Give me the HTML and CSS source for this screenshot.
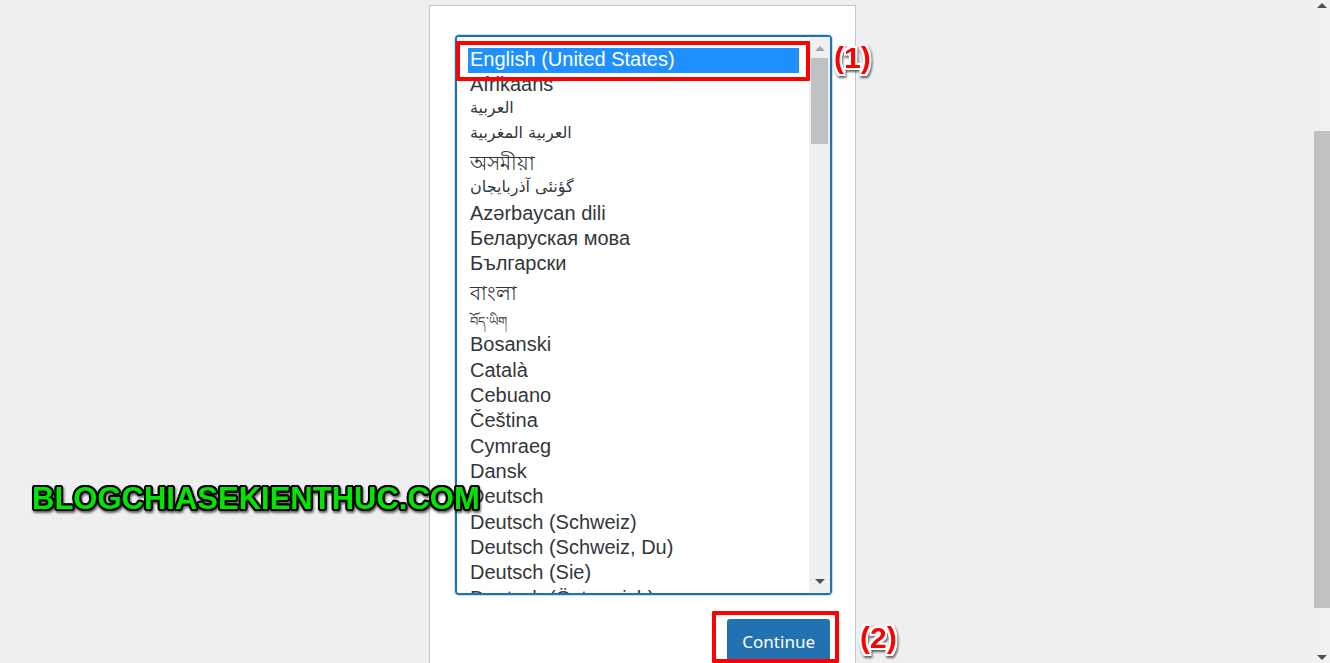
FILE: index.html
```
<!DOCTYPE html>
<html lang="en">
<head>
  <meta charset="UTF-8">
  <meta name="viewport" content="width=device-width, initial-scale=1.0">
  <title>WordPress Installation</title>
  <link rel="stylesheet" href="styles.css">
</head>
<body>
  <main class="page">
    <form class="setup">
      <div class="language-box">
        <select class="language" id="language" size="22" aria-label="Select a default language">
          <option value="" class="selected">English (United States)</option>
          <option value="af">Afrikaans</option>
          <option value="ar" class="arabic" lang="ar">العربية</option>
          <option value="ary" class="arabic" lang="ar">العربية المغربية</option>
          <option value="as" class="tall" lang="as">অসমীয়া</option>
          <option value="azb" class="arabic" lang="az">گؤنئی آذربایجان</option>
          <option value="az">Azərbaycan dili</option>
          <option value="bel">Беларуская мова</option>
          <option value="bg_BG">Български</option>
          <option value="bn_BD" class="tall" lang="bn">বাংলা</option>
          <option value="bo" class="tibetan" lang="bo">བོད་ཡིག</option>
          <option value="bs_BA">Bosanski</option>
          <option value="ca">Català</option>
          <option value="ceb">Cebuano</option>
          <option value="cs_CZ">Čeština</option>
          <option value="cy">Cymraeg</option>
          <option value="da_DK">Dansk</option>
          <option value="de_DE">Deutsch</option>
          <option value="de_CH">Deutsch (Schweiz)</option>
          <option value="de_CH_informal">Deutsch (Schweiz, Du)</option>
          <option value="de_DE_formal">Deutsch (Sie)</option>
          <option value="de_AT">Deutsch (Österreich)</option>
        </select>
        <div class="list-scroll" aria-hidden="true">
          <svg class="arrow muted" viewBox="0 0 10 5"><path d="M0 5L5 0L10 5Z"/></svg>
          <div class="list-thumb"></div>
          <svg class="arrow" viewBox="0 0 10 5"><path d="M0 0L5 5L10 0Z"/></svg>
        </div>
        <div class="mark mark-language"></div>
        <span class="step step-one">(1)</span>
      </div>
      <div class="actions">
        <button type="button" class="continue">Continue</button>
        <div class="mark mark-continue"></div>
        <span class="step step-two">(2)</span>
      </div>
    </form>
  </main>

  <!-- Window scrollbar -->
  <div class="page-scroll" aria-hidden="true">
    <svg class="arrow" viewBox="0 0 10 5"><path d="M0 5L5 0L10 5Z"/></svg>
    <div class="page-thumb"></div>
    <svg class="arrow" viewBox="0 0 10 5"><path d="M0 0L5 5L10 0Z"/></svg>
  </div>

  <div class="watermark">BLOGCHIASEKIENTHUC.COM</div>
</body>
</html>
```

FILE: styles.css
```
* {
  box-sizing: border-box;
}

body {
  margin: 0;
  height: 100vh;
  display: flex;
  overflow: hidden;
  position: relative;
  background: #efeff1;
  color: #32373c;
  font-family: "Liberation Sans", Arial, sans-serif;
}

.page {
  flex: 1;
  display: flex;
  justify-content: center;
  align-items: flex-start;
  padding: 5px 28px 0 0;
}

/* Installer card */
.setup {
  width: 100%;
  max-width: 427px;
  padding: 29px 23px 0 25px;
  background: #fff;
  border: 1px solid #c3c4c7;
}

.language-box {
  display: flex;
  position: relative;
  border: 2px solid #2271b1;
  border-radius: 4px;
  box-shadow: 0 0 0 1px #c5e0f0;
}

.language {
  flex: 1;
  min-width: 0;
  height: 556px;
  padding: 11px 10px 0 11px;
  border: 0;
  border-radius: 2px;
  outline: 0;
  overflow: hidden;
  background: #fff;
  color: #32373c;
  font-family: "Liberation Sans", Arial, sans-serif;
  font-size: 20px;
}

.language option {
  height: 25px;
  min-height: 0;
  padding: 0 2px;
  line-height: 23px;
}

.language option:nth-child(3n + 9) {
  height: 26px;
}

.language option.tall {
  height: 29px;
  line-height: 30px;
}

.language option.arabic {
  font-family: "DejaVu Sans", sans-serif;
  font-size: 16px;
}

.language option.tibetan {
  height: 26px;
  font-size: 13px;
  line-height: 28px;
}

.language option.selected {
  background: #1e90ff;
  color: #fff;
}

/* Scrollbars */
.list-scroll {
  width: 21px;
  padding: 9px 2px;
  display: flex;
  flex-direction: column;
  align-items: center;
  background: #f0f0f0;
}

.list-thumb {
  width: 100%;
  height: 86px;
  margin: 7px 0 auto;
  background: #c1c1c1;
}

.arrow {
  width: 10px;
  height: 5px;
  fill: #505050;
}

.arrow.muted {
  fill: #a3a3a3;
}

.page-scroll {
  width: 17px;
  padding: 3px 0;
  display: flex;
  flex-direction: column;
  align-items: center;
  background: #f1f1f1;
}

.page-thumb {
  width: 100%;
  height: 477px;
  margin: 123px 0 auto 1px;
  background: #c1c1c1;
}

/* Continue button */
.actions {
  display: flex;
  justify-content: flex-end;
  position: relative;
  padding: 24px 2px 0 0;
}

.continue {
  height: 44px;
  padding: 0 15px;
  border: 0;
  border-radius: 3px;
  background: #2271b1;
  color: #fff;
  font-family: "Noto Sans", "Open Sans", sans-serif;
  font-size: 17px;
  cursor: pointer;
}

/* Highlight boxes and step numbers */
.mark {
  position: absolute;
  border: 4px solid #f00;
  border-radius: 1px;
  pointer-events: none;
}

.mark-language {
  top: 4px;
  left: -1px;
  right: 20px;
  height: 40px;
}

.mark-continue {
  top: 16px;
  right: -7px;
  width: 127px;
  height: 52px;
}

.step {
  position: absolute;
  color: #f00;
  font-size: 30px;
  font-weight: bold;
  line-height: 32px;
  text-shadow: 2px 0 #fff, -2px 0 #fff, 0 2px #fff, 0 -2px #fff,
    2px 2px #fff, -2px 2px #fff, 2px -2px #fff, -2px -2px #fff;
  filter: drop-shadow(1px 2px 1px rgba(0, 0, 0, 0.6));
}

.step-one {
  top: 5px;
  left: 100%;
  margin-left: 4px;
}

.step-two {
  top: 27px;
  left: 100%;
  margin-left: 28px;
}

.watermark {
  position: absolute;
  left: 32px;
  bottom: 146px;
  color: #00e600;
  font-size: 31px;
  font-weight: bold;
  font-kerning: none;
  line-height: 36px;
  text-shadow: 2px 0 #000, -2px 0 #000, 0 2px #000, 0 -2px #000,
    2px 1px #000, -2px 1px #000, 2px -1px #000, -2px -1px #000,
    1px 2px #000, -1px 2px #000, 1px -2px #000, -1px -2px #000;
  filter: drop-shadow(1px 2px 1px rgba(0, 0, 0, 0.6));
}
```
